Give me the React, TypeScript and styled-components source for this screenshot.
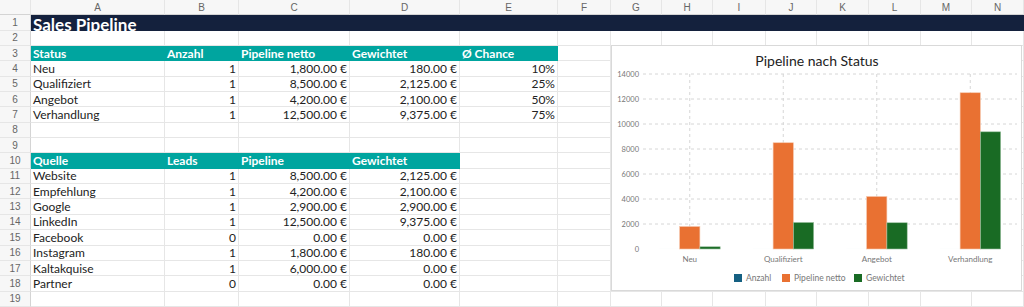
import React from "react";
import styled, { createGlobalStyle } from "styled-components";

const GlobalStyle = createGlobalStyle`
  html, body { margin: 0; padding: 0; background: #ffffff; }
  body { font-family: "Lato", "Liberation Sans", sans-serif; overflow: hidden; }
`;

const COLS = [31, 134, 74, 111, 110, 98, 53, 51, 51, 53, 51, 52, 52, 51, 52];
const LETTERS = ["A", "B", "C", "D", "E", "F", "G", "H", "I", "J", "K", "L", "M", "N"];
const ROW_H = 307 / 20;
const GRID = "#e6e6e6";
const TEAL = "#00a59f";
const NAVY = "#14213d";

const Page = styled.div`
  position: relative;
  width: 1024px;
  height: 307px;
  overflow: hidden;
`;

const Sheet = styled.div`
  display: grid;
  grid-template-columns: ${COLS.map((c) => `${c}px`).join(" ")};
  grid-template-rows: repeat(20, ${ROW_H}px);
  width: 1024px;
`;

const ColHead = styled.div`
  box-sizing: border-box;
  background: #f7f7f7;
  border-right: 1px solid ${GRID};
  border-bottom: 1px solid #d4d4d4;
  display: flex;
  align-items: center;
  justify-content: center;
  font-family: "Liberation Sans", Arial, sans-serif;
  font-size: 10px;
  color: #666;
`;

const RowHead = styled.div`
  box-sizing: border-box;
  background: #f7f7f7;
  border-right: 1px solid #d4d4d4;
  border-bottom: 1px solid ${GRID};
  display: flex;
  align-items: center;
  justify-content: center;
  font-family: "Liberation Sans", Arial, sans-serif;
  font-size: 10px;
  color: #666;
`;

type Variant = "plain" | "head";

const Cell = styled.div<{ $align?: "left" | "right"; $variant?: Variant }>`
  box-sizing: border-box;
  display: flex;
  align-items: center;
  justify-content: ${(p) => (p.$align === "right" ? "flex-end" : "flex-start")};
  padding: 0 2px;
  white-space: nowrap;
  overflow: hidden;
  font-size: 12px;
  color: #222;
  border-right: 1px solid ${GRID};
  border-bottom: 1px solid ${GRID};
  ${(p) =>
    p.$variant === "head" &&
    `
    background: ${TEAL};
    border-color: ${TEAL};
    color: #ffffff;
    font-weight: 700;
  `}
`;

const TitleCell = styled.div`
  grid-column: 2 / -1;
  box-sizing: border-box;
  background: ${NAVY};
  color: #ffffff;
  font-weight: 700;
  font-size: 17px;
  line-height: 1;
  padding: 2px 2px 0 2px;
  display: flex;
  align-items: flex-end;
  overflow: hidden;
  white-space: nowrap;
`;

const TitleText = styled.span`
  display: block;
  transform: translateY(2px);
`;

type Row = { cells: string[]; head?: boolean };

const rows: Record<number, Row> = {
  3: { cells: ["Status", "Anzahl", "Pipeline netto", "Gewichtet", "Ø Chance"], head: true },
  4: { cells: ["Neu", "1", "1,800.00 €", "180.00 €", "10%"] },
  5: { cells: ["Qualifiziert", "1", "8,500.00 €", "2,125.00 €", "25%"] },
  6: { cells: ["Angebot", "1", "4,200.00 €", "2,100.00 €", "50%"] },
  7: { cells: ["Verhandlung", "1", "12,500.00 €", "9,375.00 €", "75%"] },
  10: { cells: ["Quelle", "Leads", "Pipeline", "Gewichtet"], head: true },
  11: { cells: ["Website", "1", "8,500.00 €", "2,125.00 €"] },
  12: { cells: ["Empfehlung", "1", "4,200.00 €", "2,100.00 €"] },
  13: { cells: ["Google", "1", "2,900.00 €", "2,900.00 €"] },
  14: { cells: ["LinkedIn", "1", "12,500.00 €", "9,375.00 €"] },
  15: { cells: ["Facebook", "0", "0.00 €", "0.00 €"] },
  16: { cells: ["Instagram", "1", "1,800.00 €", "180.00 €"] },
  17: { cells: ["Kaltakquise", "1", "6,000.00 €", "0.00 €"] },
  18: { cells: ["Partner", "0", "0.00 €", "0.00 €"] },
};

const ChartBox = styled.div`
  position: absolute;
  left: 611px;
  top: 45px;
  width: 411px;
  height: 246px;
  box-sizing: border-box;
  background: #ffffff;
  border: 1px solid #d9d9d9;
`;

const ChartSvg = styled.svg`
  display: block;
  font-family: "Lato", "Liberation Sans", sans-serif;
`;

const BLUE = "#156082";
const ORANGE = "#e97132";
const GREEN = "#196b24";

const chartData = [
  { label: "Neu", anzahl: 1, netto: 1800, gew: 180 },
  { label: "Qualifiziert", anzahl: 1, netto: 8500, gew: 2125 },
  { label: "Angebot", anzahl: 1, netto: 4200, gew: 2100 },
  { label: "Verhandlung", anzahl: 1, netto: 12500, gew: 9375 },
];

function Chart() {
  const plotLeft = 31;
  const plotRight = 405;
  const plotTop = 28;
  const plotBottom = 203;
  const max = 14000;
  const catW = (plotRight - plotLeft) / 4;
  const barW = 20.3;
  const y = (v: number) => plotBottom - (v / max) * (plotBottom - plotTop);
  const ticks = [0, 2000, 4000, 6000, 8000, 10000, 12000, 14000];
  return (
    <ChartBox>
      <ChartSvg width={409} height={244} viewBox="0 0 409 244">
        <text x={205} y={20} textAnchor="middle" fontSize={14} fill="#222">
          Pipeline nach Status
        </text>
        {ticks.map((t) => (
          <g key={t}>
            {t > 0 && (
              <line
                x1={plotLeft}
                x2={plotRight}
                y1={y(t)}
                y2={y(t)}
                stroke="#d6d6d6"
                strokeWidth={1}
                strokeDasharray="3 3"
              />
            )}
            <text x={27} y={y(t) + 2.5} textAnchor="end" fontSize={7.5} fill="#777">
              {t}
            </text>
          </g>
        ))}
        {chartData.map((d, i) => {
          const cx = plotLeft + catW * (i + 0.5);
          return (
            <g key={d.label}>
              <line
                x1={cx}
                x2={cx}
                y1={plotTop}
                y2={plotBottom}
                stroke="#d6d6d6"
                strokeWidth={1}
                strokeDasharray="3 3"
              />
              <rect x={cx - 1.5 * barW} y={y(d.anzahl)} width={barW} height={plotBottom - y(d.anzahl)} fill={BLUE} />
              <rect
                x={cx - 0.5 * barW}
                y={y(d.netto)}
                width={barW}
                height={plotBottom - y(d.netto)}
                fill={ORANGE}
                stroke="#f6c7ac"
                strokeWidth={0.6}
              />
              <rect
                x={cx + 0.5 * barW}
                y={y(d.gew)}
                width={barW}
                height={plotBottom - y(d.gew)}
                fill={GREEN}
                stroke="#9ec4a3"
                strokeWidth={0.6}
              />
              <text x={cx} y={plotBottom + 13} textAnchor="middle" fontSize={8} fill="#777">
                {d.label}
              </text>
            </g>
          );
        })}
        <g fontSize={8.5} fill="#777">
          <rect x={122} y={228} width={8} height={8} fill={BLUE} />
          <text x={134} y={235}>Anzahl</text>
          <rect x={170} y={228} width={8} height={8} fill={ORANGE} />
          <text x={182} y={235}>Pipeline netto</text>
          <rect x={242} y={228} width={8} height={8} fill={GREEN} />
          <text x={254} y={235}>Gewichtet</text>
        </g>
      </ChartSvg>
    </ChartBox>
  );
}

export default function App() {
  const cells: React.ReactNode[] = [];
  cells.push(<ColHead key="corner" />);
  LETTERS.forEach((l) => cells.push(<ColHead key={`h-${l}`}>{l}</ColHead>));
  for (let r = 1; r <= 19; r++) {
    cells.push(<RowHead key={`r-${r}`}>{r}</RowHead>);
    if (r === 1) {
      cells.push(
        <TitleCell key="title">
          <TitleText>Sales Pipeline</TitleText>
        </TitleCell>
      );
      continue;
    }
    const row = rows[r];
    for (let c = 0; c < 14; c++) {
      const val = row ? row.cells[c] : undefined;
      const isHead = !!row?.head && val !== undefined;
      const right = !isHead && c > 0 && val !== undefined;
      cells.push(
        <Cell key={`c-${r}-${c}`} $variant={isHead ? "head" : "plain"} $align={right ? "right" : "left"}>
          {val ?? ""}
        </Cell>
      );
    }
  }
  return (
    <>
      <GlobalStyle />
      <Page>
        <Sheet>{cells}</Sheet>
        <Chart />
      </Page>
    </>
  );
}
